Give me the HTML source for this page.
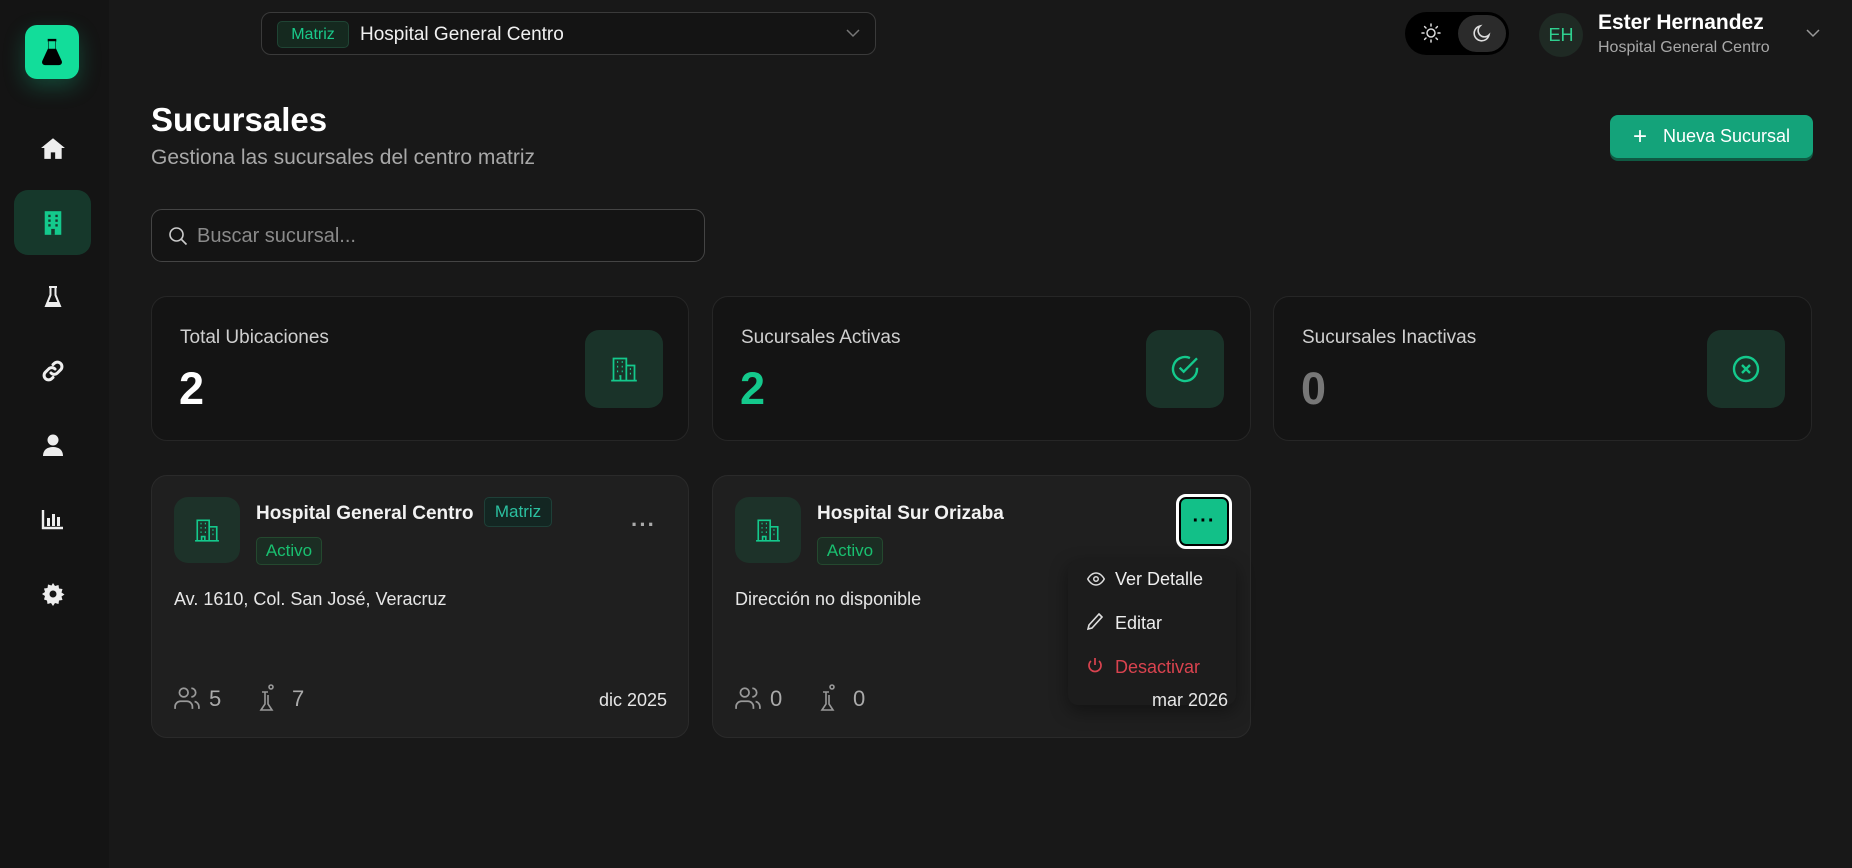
<!DOCTYPE html>
<html><head><meta charset="utf-8"><style>
*{box-sizing:border-box;margin:0;padding:0}
body{width:1852px;height:868px;background:#181818;font-family:"Liberation Sans",sans-serif;color:#f2f2f2;position:relative;overflow:hidden}
.abs{position:absolute}
.side{left:0;top:0;width:109px;height:868px;background:#141414}
.logo{left:25px;top:25px;width:54px;height:54px;border-radius:12px;background:#12dd9a;box-shadow:0 8px 22px rgba(18,221,154,.25);display:flex;align-items:center;justify-content:center}
.nav{left:14px;width:77px;height:65px;display:flex;align-items:center;justify-content:center;border-radius:14px}
.card{background:#1f1f1f;border:1px solid #2a2a2a;border-radius:16px}
.stat{background:#141414;border:1px solid #262626;border-radius:16px}
.ibox{background:#1a3329;border-radius:14px;display:flex;align-items:center;justify-content:center}
.badge{font-size:17px;border-radius:5px;display:flex;align-items:center;justify-content:center}
</style></head><body>
<div class="abs side"></div>
<div class="abs logo"><svg width="26" height="28" viewBox="0 0 24 26"><path d="M8 2h8M9.5 2v8L4 22a1.5 1.5 0 0 0 1.4 2h13.2A1.5 1.5 0 0 0 20 22L14.5 10V2" fill="#000" stroke="#000" stroke-width="2.4" stroke-linejoin="round"/><rect x="8.8" y="3" width="6.4" height="7" fill="#12dd9a"/></svg></div>
<!-- nav icons -->
<div class="abs nav" style="top:115px"><svg width="26" height="24" viewBox="0 0 24 22"><path d="M12 2L1 11h3v10h6v-6h4v6h6V11h3z" fill="#eee"/></svg></div>
<div class="abs nav" style="top:190px;background:#16382b"><svg width="20" height="26" viewBox="0 0 16 22"><rect x="1" y="1" width="14" height="20" fill="#14c98c"/><g fill="#16382b"><rect x="4" y="4" width="2" height="2"/><rect x="10" y="4" width="2" height="2"/><rect x="4" y="8" width="2" height="2"/><rect x="10" y="8" width="2" height="2"/><rect x="4" y="12" width="2" height="2"/><rect x="10" y="12" width="2" height="2"/><rect x="6.5" y="16" width="3" height="5"/></g></svg></div>
<div class="abs nav" style="top:264px"><svg width="18" height="24" viewBox="0 0 18 24"><path d="M5 2h8M6.5 2v8L2 21h14L11.5 10V2" fill="none" stroke="#eee" stroke-width="2"/><path d="M4 17h10l2 4H2z" fill="#eee"/></svg></div>
<div class="abs nav" style="top:338px"><svg width="24" height="24" viewBox="0 0 24 24"><path d="M10 14a4.5 4.5 0 0 0 6.4 0l3.2-3.2a4.5 4.5 0 0 0-6.4-6.4L12 5.6M14 10a4.5 4.5 0 0 0-6.4 0l-3.2 3.2a4.5 4.5 0 0 0 6.4 6.4l1.2-1.2" fill="none" stroke="#eee" stroke-width="3" stroke-linecap="round"/></svg></div>
<div class="abs nav" style="top:412px"><svg width="22" height="24" viewBox="0 0 22 24"><circle cx="11" cy="7" r="5.5" fill="#eee"/><path d="M1 23c0-6 4-9 10-9s10 3 10 9z" fill="#eee"/></svg></div>
<div class="abs nav" style="top:486px"><svg width="24" height="22" viewBox="0 0 24 22"><path d="M2 2v18h20" fill="none" stroke="#eee" stroke-width="2.4"/><rect x="6" y="10" width="3" height="8" fill="#eee"/><rect x="11" y="6" width="3" height="12" fill="#eee"/><rect x="16" y="9" width="3" height="9" fill="#eee"/></svg></div>
<div class="abs nav" style="top:561px"><svg width="24" height="24" viewBox="0 0 24 24"><path d="M12 1l2 3 3.5-1 .5 3.5 3.5.5-1 3.5 3 2-3 2 1 3.5-3.5.5-.5 3.5-3.5-1-2 3-2-3-3.5 1-.5-3.5L3 17.5l1-3.5-3-2 3-2-1-3.5L6.5 6 7 2.5 10.5 3.5z" fill="#eee"/><circle cx="12" cy="12" r="3.5" fill="#141414"/></svg></div>

<!-- top selector -->
<div class="abs" style="left:261px;top:12px;width:615px;height:43px;border:1px solid #3a3a3a;border-radius:10px;background:#141414"></div>
<div class="abs badge" style="left:277px;top:21px;width:72px;height:27px;background:#15291f;border:1px solid #1f4434;color:#19c98a;font-size:16px">Matriz</div>
<div class="abs" style="left:360px;top:24px;font-size:19px;color:#f0f0f0">Hospital General Centro</div>
<svg class="abs" style="left:846px;top:28px" width="14" height="10" viewBox="0 0 14 10"><path d="M1 2l6 6 6-6" fill="none" stroke="#777" stroke-width="1.5"/></svg>

<!-- theme toggle -->
<div class="abs" style="left:1405px;top:12px;width:104px;height:43px;background:#000;border-radius:22px"></div>
<div class="abs" style="left:1458px;top:15px;width:48px;height:37px;background:#2b2b2b;border-radius:19px"></div>
<svg class="abs" style="left:1421px;top:23px" width="20" height="20" viewBox="0 0 20 20"><circle cx="10" cy="10" r="4" fill="none" stroke="#ddd" stroke-width="1.5"/><g stroke="#ddd" stroke-width="1.5" stroke-linecap="round"><path d="M10 1v2M10 17v2M1 10h2M17 10h2M3.6 3.6l1.4 1.4M15 15l1.4 1.4M3.6 16.4L5 15M15 5l1.4-1.4"/></g></svg>
<svg class="abs" style="left:1472px;top:23px" width="20" height="20" viewBox="0 0 20 20"><path d="M17 12A7.5 7.5 0 1 1 8 3a6 6 0 0 0 9 9z" fill="none" stroke="#ddd" stroke-width="1.6"/></svg>

<!-- user -->
<div class="abs" style="left:1539px;top:13px;width:44px;height:44px;border-radius:50%;background:#1f2a24;color:#2fd08f;font-size:18px;display:flex;align-items:center;justify-content:center">EH</div>
<div class="abs" style="left:1598px;top:11px;font-size:21px;font-weight:bold;color:#fff">Ester Hernandez</div>
<div class="abs" style="left:1598px;top:39px;font-size:16px;color:#a8a8a8">Hospital General Centro</div>
<svg class="abs" style="left:1806px;top:28px" width="14" height="10" viewBox="0 0 14 10"><path d="M1 2l6 6 6-6" fill="none" stroke="#999" stroke-width="1.5"/></svg>

<!-- header -->
<div class="abs" style="left:151px;top:101px;font-size:33px;font-weight:bold;color:#fff">Sucursales</div>
<div class="abs" style="left:151px;top:146px;font-size:21px;color:#a8a8a8">Gestiona las sucursales del centro matriz</div>
<div class="abs" style="left:1610px;top:115px;width:203px;height:43px;background:#14a37a;border-radius:8px;box-shadow:0 3px 0 #0f5a43;display:flex;align-items:center;justify-content:center;font-size:18px;color:#fff"><span style="font-size:24px;margin-right:16px;font-weight:300">+</span>Nueva Sucursal</div>

<!-- search -->
<div class="abs" style="left:151px;top:209px;width:554px;height:53px;border:1px solid #444;border-radius:11px;background:#141414"></div>
<svg class="abs" style="left:168px;top:226px" width="20" height="20" viewBox="0 0 20 20"><circle cx="8.5" cy="8.5" r="6.5" fill="none" stroke="#ccc" stroke-width="1.6"/><path d="M13.5 13.5l5 5" stroke="#ccc" stroke-width="1.6"/></svg>
<div class="abs" style="left:197px;top:225px;font-size:20px;color:#8a8a8a">Buscar sucursal...</div>

<!-- stats -->
<div class="abs stat" style="left:151px;top:296px;width:538px;height:145px"></div>
<div class="abs stat" style="left:712px;top:296px;width:539px;height:145px"></div>
<div class="abs stat" style="left:1273px;top:296px;width:539px;height:145px"></div>
<div class="abs" style="left:180px;top:327px;font-size:19px;color:#cfcfcf">Total Ubicaciones</div>
<div class="abs" style="left:741px;top:327px;font-size:19px;color:#cfcfcf">Sucursales Activas</div>
<div class="abs" style="left:1302px;top:327px;font-size:19px;color:#cfcfcf">Sucursales Inactivas</div>
<div class="abs" style="left:179px;top:363px;font-size:45px;font-weight:bold;color:#fff">2</div>
<div class="abs" style="left:740px;top:363px;font-size:45px;font-weight:bold;color:#14c98c">2</div>
<div class="abs" style="left:1301px;top:363px;font-size:45px;font-weight:bold;color:#777">0</div>
<div class="abs ibox" style="left:585px;top:330px;width:78px;height:78px"><svg width="28" height="28" viewBox="0 0 24 24" fill="none" stroke="#14c98c" stroke-width="1.5"><path d="M3 22V3h11v19M14 9h7v13M1 22h22M9 22v-4h-1M6 6h1M10 6h1M6 10h1M10 10h1M6 14h1M10 14h1M17 12h1M17 16h1"/></svg></div>
<div class="abs ibox" style="left:1146px;top:330px;width:78px;height:78px"><svg width="32" height="32" viewBox="0 0 24 24" fill="none" stroke="#14c98c" stroke-width="1.8"><path d="M21 11.1V12a9 9 0 1 1-5.3-8.2"/><path d="M8 11l3 3L21 4"/></svg></div>
<div class="abs ibox" style="left:1707px;top:330px;width:78px;height:78px"><svg width="32" height="32" viewBox="0 0 24 24" fill="none" stroke="#14c98c" stroke-width="1.8"><circle cx="12" cy="12" r="9"/><path d="M9 9l6 6M15 9l-6 6"/></svg></div>

<!-- branch cards -->
<div class="abs card" style="left:151px;top:475px;width:538px;height:263px"></div>
<div class="abs card" style="left:712px;top:475px;width:539px;height:263px"></div>
<div class="abs ibox" style="left:174px;top:497px;width:66px;height:66px;background:#1d3229"><svg width="26" height="26" viewBox="0 0 24 24" fill="none" stroke="#14c98c" stroke-width="1.5"><path d="M3 22V3h11v19M14 9h7v13M1 22h22M7 22v-4h3v4M6 6h1M10 6h1M6 10h1M10 10h1M6 14h1M10 14h1M17 12h1M17 16h1"/></svg></div>
<div class="abs ibox" style="left:735px;top:497px;width:66px;height:66px;background:#1d3229"><svg width="26" height="26" viewBox="0 0 24 24" fill="none" stroke="#14c98c" stroke-width="1.5"><path d="M3 22V3h11v19M14 9h7v13M1 22h22M7 22v-4h3v4M6 6h1M10 6h1M6 10h1M10 10h1M6 14h1M10 14h1M17 12h1M17 16h1"/></svg></div>
<div class="abs" style="left:256px;top:503px;font-size:19px;font-weight:bold;color:#f2f2f2">Hospital General Centro</div>
<div class="abs badge" style="left:484px;top:497px;width:68px;height:30px;background:#132622;border:1px solid #1e4038;color:#2bc0a0">Matriz</div>
<div class="abs badge" style="left:256px;top:537px;width:66px;height:28px;background:#1b2d23;border:1px solid #24492f;color:#19c070">Activo</div>
<div class="abs" style="left:631px;top:512px;font-size:22px;color:#aaa;letter-spacing:1px;font-weight:bold">···</div>
<div class="abs" style="left:174px;top:589px;font-size:18px;color:#e6e6e6">Av. 1610, Col. San José, Veracruz</div>
<svg class="abs" style="left:174px;top:686px" width="26" height="24" viewBox="0 0 24 22" fill="none" stroke="#999" stroke-width="1.6"><circle cx="9" cy="6" r="4"/><path d="M1 21v-2a5 5 0 0 1 5-5h6a5 5 0 0 1 5 5v2M16 2a4 4 0 0 1 0 8M23 21v-2a5 5 0 0 0-4-4.8"/></svg>
<div class="abs" style="left:209px;top:686px;font-size:22px;color:#aaa">5</div>
<svg class="abs" style="left:259px;top:684px" width="18" height="28" viewBox="0 0 18 28" fill="none" stroke="#999" stroke-width="1.6"><circle cx="12" cy="3" r="2"/><path d="M3 8h6M6 8v12l-4 6h11l-4-6V11"/></svg>
<div class="abs" style="left:292px;top:686px;font-size:22px;color:#aaa">7</div>
<div class="abs" style="left:596px;top:690px;font-size:18px;color:#e6e6e6;width:71px;text-align:right">dic 2025</div>

<div class="abs" style="left:817px;top:503px;font-size:19px;font-weight:bold;color:#f2f2f2">Hospital Sur Orizaba</div>
<div class="abs badge" style="left:817px;top:537px;width:66px;height:28px;background:#1b2d23;border:1px solid #24492f;color:#19c070">Activo</div>
<div class="abs" style="left:735px;top:589px;font-size:18px;color:#e6e6e6">Dirección no disponible</div>
<svg class="abs" style="left:735px;top:686px" width="26" height="24" viewBox="0 0 24 22" fill="none" stroke="#999" stroke-width="1.6"><circle cx="9" cy="6" r="4"/><path d="M1 21v-2a5 5 0 0 1 5-5h6a5 5 0 0 1 5 5v2M16 2a4 4 0 0 1 0 8M23 21v-2a5 5 0 0 0-4-4.8"/></svg>
<div class="abs" style="left:770px;top:686px;font-size:22px;color:#aaa">0</div>
<svg class="abs" style="left:820px;top:684px" width="18" height="28" viewBox="0 0 18 28" fill="none" stroke="#999" stroke-width="1.6"><circle cx="12" cy="3" r="2"/><path d="M3 8h6M6 8v12l-4 6h11l-4-6V11"/></svg>
<div class="abs" style="left:853px;top:686px;font-size:22px;color:#aaa">0</div>

<!-- menu -->
<div class="abs" style="left:1068px;top:560px;width:168px;height:145px;background:#1c1c1c;border-radius:10px;box-shadow:0 6px 18px rgba(0,0,0,.4)"></div>
<div class="abs" style="left:1176px;top:494px;width:56px;height:55px;border:3px solid #fff;border-radius:10px;background:#12c088;box-shadow:0 0 0 2px #000 inset;display:flex;align-items:center;justify-content:center;font-size:20px;font-weight:bold;color:#000;letter-spacing:1px">···</div>
<svg class="abs" style="left:1087px;top:571px" width="18" height="16" viewBox="0 0 24 20" fill="none" stroke="#ddd" stroke-width="2"><path d="M1 10s4-8 11-8 11 8 11 8-4 8-11 8S1 10 1 10z"/><circle cx="12" cy="10" r="3"/></svg>
<div class="abs" style="left:1115px;top:569px;font-size:18px;color:#eee">Ver Detalle</div>
<svg class="abs" style="left:1087px;top:613px" width="16" height="18" viewBox="0 0 16 18" fill="none" stroke="#ddd" stroke-width="1.6"><path d="M12 1l3 3L5 15l-4 1 1-4z"/></svg>
<div class="abs" style="left:1115px;top:613px;font-size:18px;color:#eee">Editar</div>
<svg class="abs" style="left:1087px;top:657px" width="16" height="18" viewBox="0 0 16 18" fill="none" stroke="#d9434f" stroke-width="1.7"><path d="M8 1v7M4 4a6 6 0 1 0 8 0"/></svg>
<div class="abs" style="left:1115px;top:657px;font-size:18px;color:#d9434f">Desactivar</div>
<div class="abs" style="left:1140px;top:690px;font-size:18px;color:#e6e6e6;width:88px;text-align:right">mar 2026</div>
</body></html>
